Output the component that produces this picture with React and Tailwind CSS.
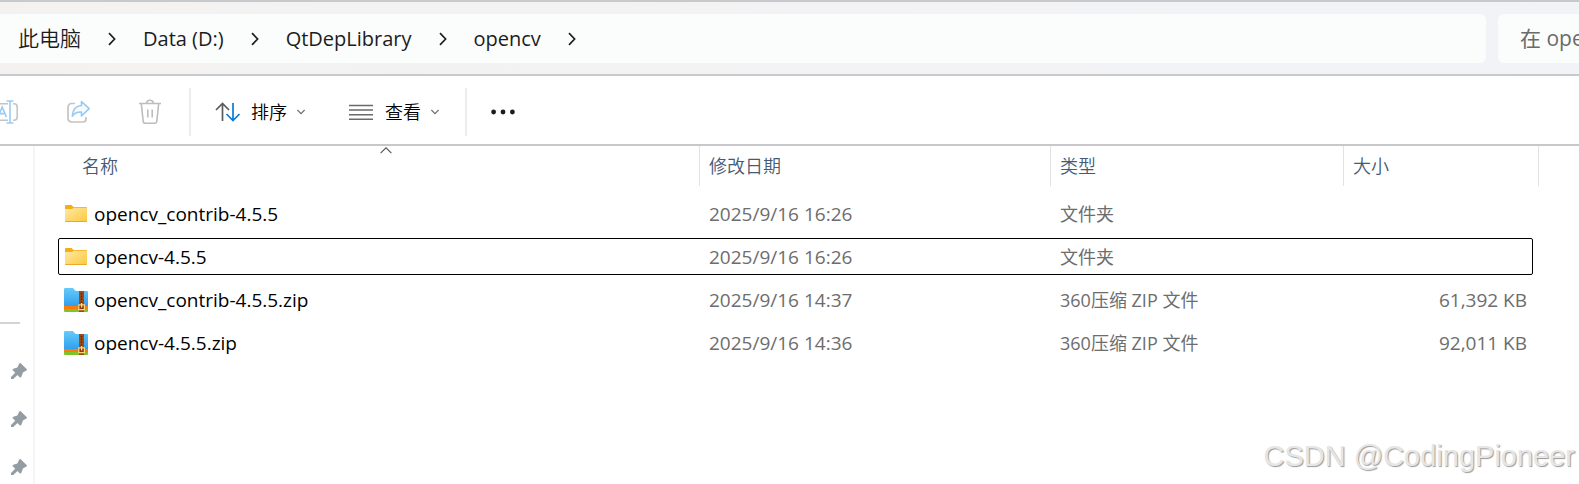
import { Fragment } from "react";

const crumbs = ["此电脑", "Data (D:)", "QtDepLibrary", "opencv"];

const files = [
  { name: "opencv_contrib-4.5.5", date: "2025/9/16 16:26", type: "文件夹", size: "", kind: "folder" },
  { name: "opencv-4.5.5", date: "2025/9/16 16:26", type: "文件夹", size: "", kind: "folder", focused: true },
  { name: "opencv_contrib-4.5.5.zip", date: "2025/9/16 14:37", type: "360压缩 ZIP 文件", size: "61,392 KB", kind: "zip" },
  { name: "opencv-4.5.5.zip", date: "2025/9/16 14:36", type: "360压缩 ZIP 文件", size: "92,011 KB", kind: "zip" },
];

////////////////////////////////////icons
const ChevronRight = () => (
  <svg width="8" height="14" viewBox="0 0 8 14" fill="none" stroke="#1f1f1f" strokeWidth="1.7">
    <path d="M1 1.2 6.6 7 1 12.8" />
  </svg>
);

const ChevronDown = () => (
  <svg width="8" height="6" viewBox="0 0 8 6" fill="none" stroke="#6b6b6b" strokeWidth="1.1">
    <path d="M.4 1 4 4.6 7.6 1" />
  </svg>
);

const RenameIcon = () => (
  <svg width="24" height="24" viewBox="0 0 24 24" fill="none" strokeWidth="1.6">
    <g stroke="#c4c4c4">
      <path d="M13 3.8H4a3 3 0 0 0-3 3v10.4a3 3 0 0 0 3 3h9" />
      <path d="M18 3.8h1A3.2 3.2 0 0 1 22.2 7v10a3.2 3.2 0 0 1-3.2 3.2h-1" />
    </g>
    <g stroke="#9acbf0">
      <path d="M15 1v22M11.5 1h7M11.5 23h7" />
      <path d="M3 17 7.2 7l4.2 10M4.600 13.600h5.200" />
    </g>
  </svg>
);

const ShareIcon = () => (
  <svg width="24" height="24" viewBox="0 0 24 24" fill="none" strokeWidth="1.7" strokeLinejoin="round">
    <path d="M9 3.5H5.500A3.500 3.500 0 0 0 2 7v11.500A3.500 3.500 0 0 0 5.500 22h11.500a3 3 0 0 0 3-3v-2" stroke="#c4c4c4" />
    <path
      d="M15.500 1.500 23.200 8.700 15.500 16v-4c-4-.2-7 1-9.100 4C6.600 10.300 9.500 6 15.500 5.500z"
      stroke="#9acbf0"
      fill="#f6fafd"
    />
  </svg>
);

const TrashIcon = () => (
  <svg width="24" height="26" viewBox="0 0 24 26" fill="none" stroke="#bdbdbd" strokeWidth="1.6">
    <path d="M1 4.500h22M8.500 4.500a3.500 3.300 0 0 1 7 0M3.300 4.500l1.900 17.800a2.200 2.200 0 0 0 2.200 2h9.200a2.200 2.200 0 0 0 2.200-2l1.900-17.800M9.800 10.500v8M14.200 10.500v8" />
  </svg>
);

const SortIcon = () => (
  <svg width="26" height="20" viewBox="0 0 26 20" fill="none" strokeWidth="1.7">
    <path d="M7.500 19V1.500M1 8l6.500-6.500L14 8" stroke="#5c5c5c" />
    <path d="M18 1v17.500M11.500 12l6.500 6.500 6.500-6.500" stroke="#0a7bd6" />
  </svg>
);

const ViewIcon = () => (
  <svg width="24" height="17" viewBox="0 0 24 17" fill="none" stroke="#6a6a6a" strokeWidth="1.6">
    <path d="M0 1.500h24M0 6h24M0 10.700h24M0 15.300h24" />
  </svg>
);

const DotsIcon = () => (
  <svg width="24" height="6" viewBox="0 0 24 6" fill="#1c1c1c">
    <circle cx="2.6" cy="3" r="2.4" />
    <circle cx="12" cy="3" r="2.4" />
    <circle cx="21.4" cy="3" r="2.4" />
  </svg>
);

const PinIcon = () => (
  <svg width="16" height="16" viewBox="0 0 16 16" fill="#939da3">
    <path d="M8.300.4c.5-.5 1.100-.4 1.600 0l5.700 5.500c.5.500.4 1.200-.2 1.500l-3.500 2-1.500 4.300c-.3.900-1.100 1.100-1.700.5L6.500 12l-4.300 3.900H0v-2L4.200 9.800 2 7.600c-.7-.7-.5-1.500.4-1.800L6.300 4.400z" />
  </svg>
);

const FolderIcon = () => (
  <svg width="24" height="24" viewBox="0 0 24 24">
    <defs>
      <linearGradient id="folder" x1="0" y1="0" x2="1" y2="1">
        <stop offset="0" stopColor="#ffe9a6" />
        <stop offset="1" stopColor="#fdc93c" />
      </linearGradient>
    </defs>
    <path d="M1 4a1 1 0 0 1 1-1h5.500l2 2H22a1 1 0 0 1 1 1v4H1z" fill="#f3ae15" />
    <path d="M1 7h7.200l1.500-1.200H22.300a.7.700 0 0 1 .7.700v12.700a.8.800 0 0 1-.8.800H1.800a.8.800 0 0 1-.8-.8z" fill="url(#folder)" />
    <path d="M1 18.900h22a1.100 1.100 0 0 1-1 1.100H2a1.100 1.100 0 0 1-1-1.100z" fill="#e9a92a" />
  </svg>
);

const ZipIcon = () => (
  <svg width="24" height="24" viewBox="0 0 24 24">
    <defs>
      <linearGradient id="zip" x1="0" y1="0" x2="0" y2="1">
        <stop offset="0" stopColor="#66cbfa" />
        <stop offset="1" stopColor="#319fee" />
      </linearGradient>
    </defs>
    <path d="M0 16h24v7a1 1 0 0 1-1 1H1a1 1 0 0 1-1-1z" fill="#7cc62b" />
    <path d="M0 16h24v5H0z" fill="#ff7a0c" />
    <path d="M0 1.200A1.200 1.200 0 0 1 1.200 0h7.600l3 3H23a1 1 0 0 1 1 1v14H0z" fill="url(#zip)" />
    <path d="M15 3h5v21h-5z" fill="#a04a12" />
    <path d="M17.500 5v11" stroke="#5c2708" strokeWidth="1.4" strokeDasharray="1.4 1.4" />
    <path d="M14.800 16.800h5.600v4.800h-5.600z" fill="#8a3c0c" stroke="#ffd27a" strokeWidth="1.2" />
    <path d="M17.600 15v4.500" stroke="#ffe3a0" strokeWidth="1.2" />
  </svg>
);

////////////////////////////////////sections
const AddressBar = () => (
  <header className="flex h-[76px] gap-3 border-y-2 border-[#c8c9cd] bg-linear-to-r from-[#f4f2f1] to-[#f1f3f7] pt-3 pb-[11px]">
    <nav aria-label="路径" className="flex min-w-0 grow items-center rounded-r-md bg-[#fbfdfc] pl-[18px]">
      {crumbs.map((crumb) => (
        <Fragment key={crumb}>
          <button className="text-xl whitespace-nowrap text-[#1c1c1c] first:text-[21px] first:font-[350]">{crumb}</button>
          <span className="mx-[27px] shrink-0">
            <ChevronRight />
          </span>
        </Fragment>
      ))}
    </nav>
    <input
      type="text"
      aria-label="搜索"
      placeholder="在 opencv 中搜索"
      className="w-[81px] shrink-0 rounded-l-md bg-[#fbfdfc] pl-[22px] text-[21px] placeholder:text-[#6a6a6a]"
    />
  </header>
);

const Toolbar = () => (
  <div className="flex h-[70px] items-center border-b-2 border-[#c8c7cb] pt-1 text-lg font-[350] text-black">
    <button aria-label="重命名" className="-ml-[5px]">
      <RenameIcon />
    </button>
    <button aria-label="共享" className="ml-[47px]">
      <ShareIcon />
    </button>
    <button aria-label="删除" className="ml-12">
      <TrashIcon />
    </button>
    <span className="ml-[27px] h-12 w-0.5 bg-[#ededed]" />
    <button className="ml-6 flex items-center">
      <SortIcon />
      <span className="mr-2.5 ml-2.5">排序</span>
      <ChevronDown />
    </button>
    <button className="ml-11 flex items-center">
      <ViewIcon />
      <span className="mr-2.5 ml-3">查看</span>
      <ChevronDown />
    </button>
    <span className="ml-[26px] h-12 w-0.5 bg-[#ededed]" />
    <button aria-label="更多" className="ml-6">
      <DotsIcon />
    </button>
  </div>
);

const Sidebar = () => (
  <aside className="w-[35px] shrink-0 border-r-2 border-[#f5f5f5] pt-[176px]">
    <hr className="w-5 border-t-2 border-[#d3d3d3]" />
    <div className="flex flex-col gap-8 pt-[39px] pl-[11px]">
      <PinIcon />
      <PinIcon />
      <PinIcon />
    </div>
  </aside>
);

const FileTable = () => (
  <table className="mr-10 ml-[23px] block grow text-lg">
    <thead className="block">
      <tr className="grid h-10 grid-cols-[641px_351px_293px_1fr] text-left text-[#455a76]">
        <th className="relative pt-1.5 pl-6 font-[350]">
          名称
          <svg className="absolute top-px left-[322px]" width="12" height="7" viewBox="0 0 12 7" fill="none" stroke="#555" strokeWidth="1.1">
            <path d="M.6 6.200 6 .8l5.400 5.400" />
          </svg>
        </th>
        <th className="border-l border-[#e2e2e2] pt-1.5 pl-[9px] font-[350]">修改日期</th>
        <th className="border-l border-[#e2e2e2] pt-1.5 pl-[9px] font-[350]">类型</th>
        <th className="border-x border-[#e2e2e2] pt-1.5 pl-[9px] font-[350]">大小</th>
      </tr>
    </thead>
    <tbody className="mt-[9px] mr-1.5 flex flex-col gap-1.5">
      {files.map((file) => (
        <tr
          key={file.name}
          className={`grid h-[37px] grid-cols-[640px_351px_293px_1fr] items-center rounded-xs border text-[#6d6d6d] ${
            file.focused ? "border-black" : "border-transparent"
          }`}
        >
          <td className="flex items-center gap-1.5 pt-0.5 pl-[5px] text-[19px] text-black">
            {file.kind === "folder" ? <FolderIcon /> : <ZipIcon />}
            {file.name}
          </td>
          <td className="pt-0.5 pl-2.5 text-[19px]">{file.date}</td>
          <td className="pl-2.5">{file.type}</td>
          <td className="pt-0.5 pr-[5px] text-right text-[19px]">{file.size}</td>
        </tr>
      ))}
    </tbody>
  </table>
);

const App = () => {
  return (
    <div className="relative flex min-h-screen flex-col overflow-hidden bg-white font-['Open_Sans','Noto_Sans_CJK_SC',sans-serif]">
      <AddressBar />
      <Toolbar />
      <main className="flex grow">
        <Sidebar />
        <FileTable />
      </main>
      <p className="absolute right-1 bottom-1.5 font-['Liberation_Sans',sans-serif] text-[29px] text-[#e6e6e6] [text-shadow:1px_1px_1px_#999]">
        CSDN @CodingPioneer
      </p>
    </div>
  );
};

export default App;
